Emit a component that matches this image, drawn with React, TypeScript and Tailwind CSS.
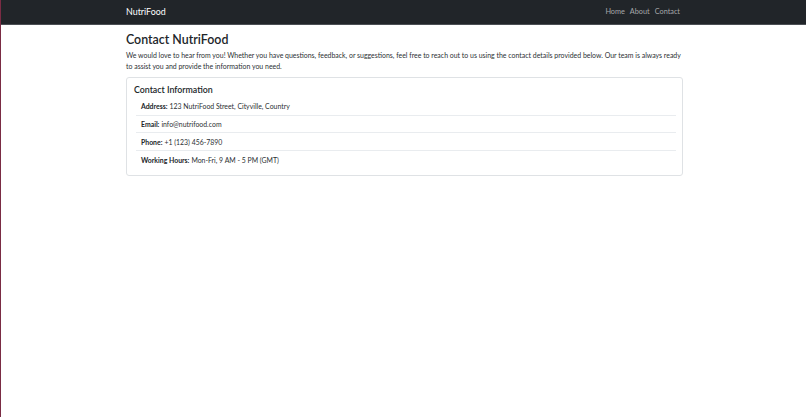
export default function App() {
  const items = [
    { label: "Address:", value: "123 NutriFood Street, Cityville, Country" },
    { label: "Email:", value: "info@nutrifood.com" },
    { label: "Phone:", value: "+1 (123) 456-7890" },
    { label: "Working Hours:", value: "Mon-Fri, 9 AM - 5 PM (GMT)" },
  ]

  return (
    <div
      className="min-h-[417px] bg-white border-l border-[#7a2c44] text-[#212529]"
      style={{ fontFamily: 'Lato, "Noto Sans", sans-serif' }}
    >
      {/* Navbar */}
      <nav className="h-[25px] bg-[#212529] border-b border-[#4b4f54]">
        <div className="w-[557px] ml-[125px] h-full flex items-center justify-between">
          <span className="text-[8.9px] text-white">NutriFood</span>
          <div className="flex gap-[5px] text-[7.3px] text-[#a6a8aa] pr-[3px]">
            <span>Home</span>
            <span>About</span>
            <span>Contact</span>
          </div>
        </div>
      </nav>

      {/* Content */}
      <main className="w-[557px] ml-[125px] pt-[6px]">
        <h2 className="text-[12.4px] font-semibold leading-[18px]">Contact NutriFood</h2>
        <p className="mt-[1px] w-[562px] text-[6.95px] leading-[11px] text-[#2b2f33]">
          We would love to hear from you! Whether you have questions, feedback, or suggestions, feel free to reach out to us using the contact details provided below. Our team is always ready to assist you and provide the information you need.
        </p>

        <div className="mt-[5px] border border-[#dfe2e5] rounded-[3px] px-[7px] pt-[6px] pb-[6px]">
          <h5 className="text-[8.8px] font-semibold leading-[12px]">Contact Information</h5>
          <ul className="mt-[2px] ml-[2px] mr-[-1px]">
            {items.map((item, i) => (
              <li
                key={item.label}
                className={
                  "px-[5px] h-[17.7px] flex items-center text-[6.9px] " +
                  (i < items.length - 1 ? "border-b border-[#e9ecef]" : "")
                }
              >
                <span className="font-bold">{item.label}</span>
                <span className="ml-[2px] text-[#2b2f33]">{item.value}</span>
              </li>
            ))}
          </ul>
        </div>
      </main>
    </div>
  )
}
